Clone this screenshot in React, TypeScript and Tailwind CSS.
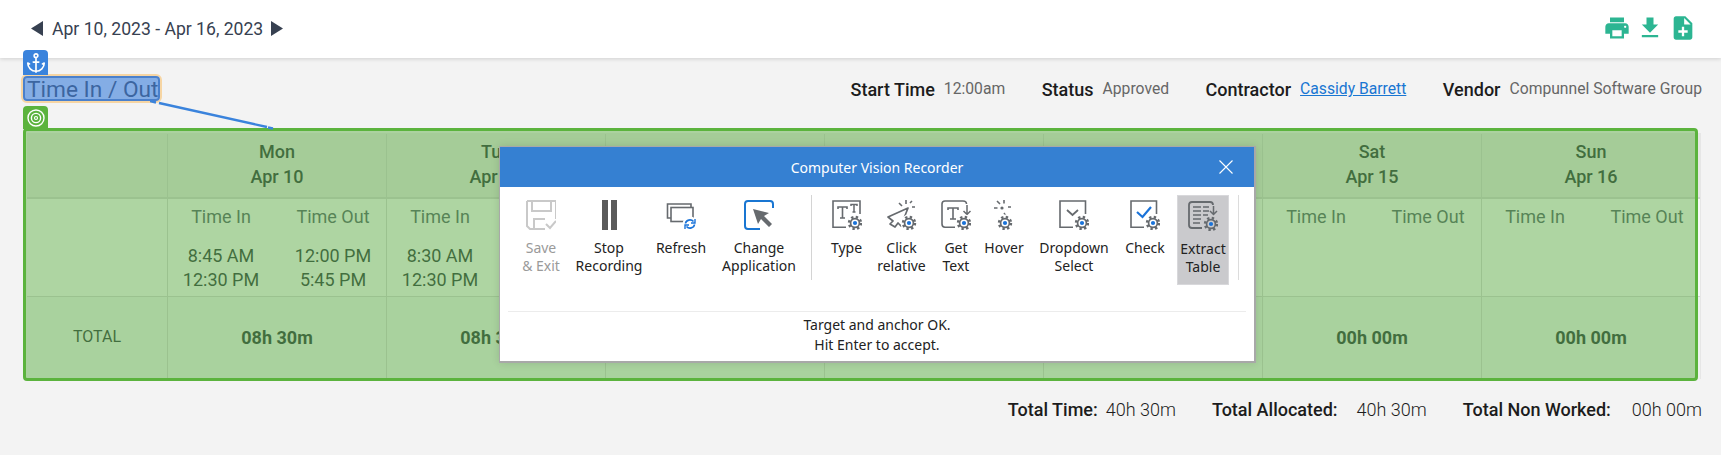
import React from "react";
import { MdPrint, MdFileDownload, MdNoteAdd } from "react-icons/md";
import { Anchor } from "lucide-react";

const G = "#666a6e";
const B = "#1a73d9";

function Gear({ x = 23, y = 23, bg = "#ffffff" }: { x?: number; y?: number; bg?: string }) {
  return (
    <g>
      <circle cx={x} cy={y} r={8.5} fill={bg} />
      <circle cx={x} cy={y} r={5.8} fill="none" stroke={G} strokeWidth={2.8} strokeDasharray="2.28 2.28" />
      <circle cx={x} cy={y} r={4.4} fill={bg} stroke={G} strokeWidth={1.7} />
      <circle cx={x} cy={y} r={2.1} fill={B} />
    </g>
  );
}

function Svg({ children, w = 30 }: { children: React.ReactNode; w?: number }) {
  return (
    <svg width={w} height={30} viewBox={`0 0 ${w} 30`} fill="none">
      {children}
    </svg>
  );
}

const icons: Record<string, React.ReactNode> = {
  save: (
    <Svg>
      <path d="M1 1H30V19M1 1V26L4 29H19" stroke="#c9c9c9" strokeWidth={2} />
      <path d="M6 1V11H25V1" stroke="#c9c9c9" strokeWidth={2} />
      <path d="M8 29V19H19" stroke="#c9c9c9" strokeWidth={2} />
      <path d="M20 24L24 28L30 21" stroke="#c9c9c9" strokeWidth={2} />
    </Svg>
  ),
  stop: (
    <Svg w={15}>
      <rect x={0} y={0} width={6} height={30} fill="#5a5a5a" />
      <rect x={9} y={0} width={6} height={30} fill="#5a5a5a" />
    </Svg>
  ),
  refresh: (
    <Svg>
      <path d="M5 18H1.5V4H25V8" stroke={G} strokeWidth={1.6} />
      <rect x={5} y={7.5} width={22} height={14} stroke={G} strokeWidth={1.6} />
      <circle cx={24} cy={24} r={7.5} fill="#fff" />
      <path d="M19.5 23.5C20 19.8 25 18.8 27.5 21.5M28.5 24.5C28 28.2 23 29.2 20.5 26.5" stroke={B} strokeWidth={1.7} />
      <path d="M29 19V23H25M19 29V25H23" stroke={B} strokeWidth={1.4} />
    </Svg>
  ),
  change: (
    <Svg>
      <path d="M16 29H4C2 29 1 28 1 26V4C1 2 2 1 4 1H26C28 1 29 2 29 4V8" stroke="#1976d2" strokeWidth={2} />
      <path d="M9 9L14 24L17 19L25 27L28 24L20 16L25 13Z" fill={G} />
    </Svg>
  ),
  type: (
    <Svg>
      <path d="M14 27.2H1V1H28V14" stroke={G} strokeWidth={1.6} />
      <path d="M6 9V7H15V9M10.5 7V18M8 18H13" stroke={G} strokeWidth={1.6} />
      <path d="M19 6V4.5H25V6M22 4.5V12M20.5 12H23.5" stroke={G} strokeWidth={1.5} />
      <Gear />
    </Svg>
  ),
  click: (
    <Svg>
      <path d="M21 8L1 17L6 21L3 24L8 27L11 23L14 26Z" stroke={G} strokeWidth={1.7} strokeLinejoin="round" />
      <path d="M12 3L15 6M19 0V4M25 7H28M23 3L25 1" stroke={G} strokeWidth={1.6} />
      <Gear x={22} y={23} />
    </Svg>
  ),
  get: (
    <Svg>
      <path d="M14 27.2H4C2 27.2 1 26 1 24V4C1 2 2 1 4 1H22C24 1 25.5 2 25.5 4" stroke={G} strokeWidth={1.6} />
      <path d="M7 10V8H17V10M12 8V19M9 19H15" stroke={G} strokeWidth={1.6} />
      <path d="M26 5V14M22.5 11L26 14.5L29.5 11" stroke={G} strokeWidth={1.5} />
      <Gear />
    </Svg>
  ),
  hover: (
    <Svg>
      <path d="M8 1L11 4M15 0V3.5M5 8H8.5M19 7H22" stroke={G} strokeWidth={1.6} />
      <circle cx={13} cy={8} r={1.6} fill={G} />
      <path d="M15 13L17 16" stroke={G} strokeWidth={1.4} />
      <Gear x={16} y={23} />
    </Svg>
  ),
  dropdown: (
    <Svg>
      <path d="M14 27.2H1V1H26.5V14" stroke={G} strokeWidth={1.6} />
      <path d="M8 10L13.5 15L19 10" stroke={G} strokeWidth={1.8} />
      <Gear x={23} y={23} />
    </Svg>
  ),
  check: (
    <Svg>
      <path d="M14 27.2H1V1H26.5V14" stroke={G} strokeWidth={1.6} />
      <path d="M7 12L12.5 17L21 7" stroke={B} strokeWidth={2.2} />
      <Gear x={23} y={23} />
    </Svg>
  ),
  extract: (
    <Svg>
      <path d="M14 27H4C2 27 1 26 1 24V4C1 2 2 1 4 1H22C24 1 25 2 25 4" stroke={G} strokeWidth={1.8} />
      <path d="M5 6H13M15 6H21M5 10H13M15 10H21M5 14H13M15 14H20M5 18H13M5 22H12" stroke={G} strokeWidth={1.6} />
      <path d="M25.5 5V13M22 10L25.5 13.5L29 10" stroke={G} strokeWidth={1.5} />
      <Gear x={23} y={23} bg="#cacacd" />
    </Svg>
  ),
};

const Item = ({ icon, a, b, cls, dim }: { icon: string; a: string; b?: string; cls: string; dim?: boolean }) => (
  <div className={`flex flex-col items-center shrink-0 h-[90px] pt-[5px] ${cls}`}>
    <div className="h-[30px] flex items-center justify-center">{icons[icon]}</div>
    <div className={`mt-[9px] text-center whitespace-nowrap leading-[18px] ${dim ? "text-[#9a9a9a]" : "text-[#222222]"}`}>
      {a}
      {b && <br />}
      {b}
    </div>
  </div>
);

function Dialog() {
  return (
    <div className="absolute left-[499px] top-[146px] w-[757px] h-[217px] z-30 bg-white border-t border-l border-[#a8a8a8] border-r-2 border-b-2 shadow-[0_0_8px_rgba(0,0,0,0.12)] [font-family:'Noto_Sans',sans-serif] text-[14px]">
      <div className="h-[40px] bg-[#3580d2] relative flex items-center justify-center text-white text-[14px]">
        Computer Vision Recorder
        <svg className="absolute left-[719px] top-[13px]" width="14" height="14" viewBox="0 0 14 14">
          <path d="M0.5 0.5L13.5 13.5M13.5 0.5L0.5 13.5" stroke="#ffffff" strokeWidth="1.1" />
        </svg>
      </div>
      <div className="flex items-start pt-[8px] pl-[14px] h-[124px]">
        <Item icon="save" a="Save" b="& Exit" cls="w-[54px]" dim />
        <Item icon="stop" a="Stop" b="Recording" cls="w-[82px]" />
        <Item icon="refresh" a="Refresh" cls="w-[62px]" />
        <Item icon="change" a="Change" b="Application" cls="w-[94px]" />
        <div className="w-px h-[85px] bg-[#d4d4d4] ml-[5px] shrink-0" />
        <Item icon="type" a="Type" cls="w-[43px] ml-[13px]" />
        <Item icon="click" a="Click" b="relative" cls="w-[67px]" />
        <Item icon="get" a="Get" b="Text" cls="w-[42px]" />
        <Item icon="hover" a="Hover" cls="w-[54px]" />
        <Item icon="dropdown" a="Dropdown" b="Select" cls="w-[86px]" />
        <Item icon="check" a="Check" cls="w-[56px]" />
        <Item icon="extract" a="Extract" b="Table" cls="w-[52px] ml-[4px] bg-[#cacacd] border border-[#d8d8db]" />
        <div className="w-px h-[85px] bg-[#dcdcdc] ml-[9px] shrink-0" />
      </div>
      <div className="mx-[8px] border-t border-[#ececec] pt-[3px] text-center text-[#222222] leading-[20px]">
        Target and anchor OK.
        <br />
        Hit Enter to accept.
      </div>
    </div>
  );
}

const days = [
  { d: "Mon", n: "Apr 10", pt: "pt-[5px]", i: ["8:45 AM", "12:30 PM"], o: ["12:00 PM", "5:45 PM"], t: "08h 30m" },
  { d: "Tue", n: "Apr 11", pt: "pt-[5px]", i: ["8:30 AM", "12:30 PM"], o: ["12:00 PM", "5:30 PM"], t: "08h 30m" },
  { d: "Wed", n: "Apr 12", pt: "pt-[7px]", i: ["8:30 AM", "12:30 PM"], o: ["12:00 PM", "4:30 PM"], t: "08h 00m" },
  { d: "Thu", n: "Apr 13", pt: "pt-[7px]", i: ["8:30 AM", "12:30 PM"], o: ["12:00 PM", "4:30 PM"], t: "08h 00m" },
  { d: "Fri", n: "Apr 14", pt: "pt-[7px]", i: ["8:30 AM", "12:30 PM"], o: ["12:00 PM", "4:00 PM"], t: "07h 30m" },
  { d: "Sat", n: "Apr 15", pt: "pt-[5px]", i: [], o: [], t: "00h 00m" },
  { d: "Sun", n: "Apr 16", pt: "pt-[5px]", i: [], o: [], t: "00h 00m" },
];

function Table() {
  return (
    <div className="ml-[27px] w-[1674px] grid grid-cols-[140px_repeat(7,1fr)] grid-rows-[65px_97px_83px] border-t border-r border-[#e6e6e6] text-[18px]">
      <div className="bg-[#e7e7e5] border-b-2 border-[#d3d3d3]" />
      {days.map((x) => (
        <div key={x.d} className={`bg-[#e7e7e5] border-l border-b-2 border-[#d3d3d3] flex flex-col items-center font-medium text-[#1f2a33] leading-[25px] ${x.pt}`}>
          <div>{x.d}</div>
          <div>{x.n}</div>
        </div>
      ))}
      <div className="bg-[#f9f9f9]" />
      {days.map((x) => (
        <div key={x.d} className="bg-[#f9f9f9] border-l border-[#d3d3d3] grid grid-cols-2 gap-x-4 px-[5px] content-start pt-[4px] text-center">
          <div className="text-[#4b5563] leading-[28px]">Time In</div>
          <div className="text-[#4b5563] leading-[28px]">Time Out</div>
          <div className="mt-[13px] text-[#1f2a33] leading-[24px]">
            {x.i.map((v) => (
              <div key={v}>{v}</div>
            ))}
          </div>
          <div className="mt-[13px] text-[#1f2a33] leading-[24px]">
            {x.o.map((v) => (
              <div key={v}>{v}</div>
            ))}
          </div>
        </div>
      ))}
      <div className="bg-[#eff2f0] border-t border-[#d3d3d3] flex items-center justify-center pb-[3px] text-[16px] text-[#1f2a33]">TOTAL</div>
      {days.map((x) => (
        <div key={x.d} className="bg-[#eff2f0] border-l border-t border-[#d3d3d3] flex items-center justify-center pb-[2px] font-bold text-[#1f2a33]">
          {x.t}
        </div>
      ))}
    </div>
  );
}

const Info = ({ k, v, link }: { k: string; v: string; link?: boolean }) => (
  <div className="flex items-center gap-[9px]">
    <span className="text-[18px] font-medium text-[#1c1c1c]">{k}</span>
    <span className={`text-[15.7px] ${link ? "text-[#1976d2] underline" : "text-[#666666]"}`}>{v}</span>
  </div>
);

export default function App() {
  return (
    <div className="relative w-[1721px] h-[455px] overflow-hidden bg-[#f3f3f3] [font-family:Roboto,sans-serif]">
      <header className="h-[58px] bg-white shadow-[0_1px_4px_rgba(0,0,0,0.15)] flex items-center justify-between pl-[31px] pr-[24px] relative z-0">
        <div className="flex items-center text-[#374151]">
          <svg width="12" height="15" viewBox="0 0 12 15"><path d="M12 0V15L0 7.5Z" fill="#374151" /></svg>
          <span className="ml-[9px] mr-[8px] text-[17.6px]">Apr 10, 2023 - Apr 16, 2023</span>
          <svg width="12" height="15" viewBox="0 0 12 15"><path d="M0 0V15L12 7.5Z" fill="#374151" /></svg>
        </div>
        <div className="flex items-center gap-[5px] text-[#2cb592] mb-[3px]">
          <MdPrint size={28} />
          <MdFileDownload size={28} />
          <MdNoteAdd size={28} />
        </div>
      </header>

      <div className="h-[62px] flex items-center justify-between pl-[27px] pr-[19px]">
        <div className="text-[22.7px] text-[#3f3f46] pt-[2px]">Time In / Out</div>
        <div className="flex items-center gap-[36.5px]">
          <Info k="Start Time" v="12:00am" />
          <Info k="Status" v="Approved" />
          <Info k="Contractor" v="Cassidy Barrett" link />
          <Info k="Vendor" v="Compunnel Software Group" />
        </div>
      </div>

      <div className="mt-[13px]">
        <Table />
      </div>

      <div className="mt-[18px] h-[24px] flex items-center justify-end pr-[19px] text-[18px] text-[#1c1c1c]">
        <span className="font-medium">Total Time:</span>
        <span className="ml-[8px] font-light">40h 30m</span>
        <span className="ml-[36px] font-medium">Total Allocated:</span>
        <span className="ml-[19px] font-light">40h 30m</span>
        <span className="ml-[36px] font-medium">Total Non Worked:</span>
        <span className="ml-[21px] font-light">00h 00m</span>
      </div>

      {/* Computer-vision selection overlays */}
      <div className="absolute left-[23px] top-[128px] w-[1675px] h-[253px] z-20 bg-[#63b14b]/50 border-[3px] border-[#5bb33d] rounded-[4px]" />
      <div className="absolute left-[23px] top-[106px] w-[25px] h-[23px] z-20 bg-[#5bb33d] rounded-t-[4px] flex items-center justify-center">
        <svg width="18" height="18" viewBox="0 0 18 18" fill="none" stroke="#fff">
          <circle cx="9" cy="9" r="8" strokeWidth="1.4" />
          <circle cx="9" cy="9" r="4.6" strokeWidth="1.4" />
          <circle cx="9" cy="9" r="1.5" strokeWidth="1.2" />
        </svg>
      </div>
      <div className="absolute left-[21px] top-[74px] w-[141px] h-[29px] z-20 rounded-[6px] border-2 border-[#f6d5a3]">
        <div className="w-full h-full rounded-[4px] bg-[#3a7fdc]/60 border-2 border-[#4a80cc]" />
      </div>
      <div className="absolute left-[23px] top-[50px] w-[25px] h-[25px] z-20 bg-[#3a83dc] rounded-t-[4px] flex items-center justify-center text-white">
        <Anchor size={22} strokeWidth={1.8} />
      </div>
      <svg className="absolute left-[150px] top-[100px] z-20" width="125" height="30" viewBox="0 0 125 30" fill="none">
        <path d="M0 1L6 2.5M9 3L117 27M118 27.5L123 28.5" stroke="#3a83dc" strokeWidth="2.4" />
      </svg>

      <Dialog />
    </div>
  );
}
